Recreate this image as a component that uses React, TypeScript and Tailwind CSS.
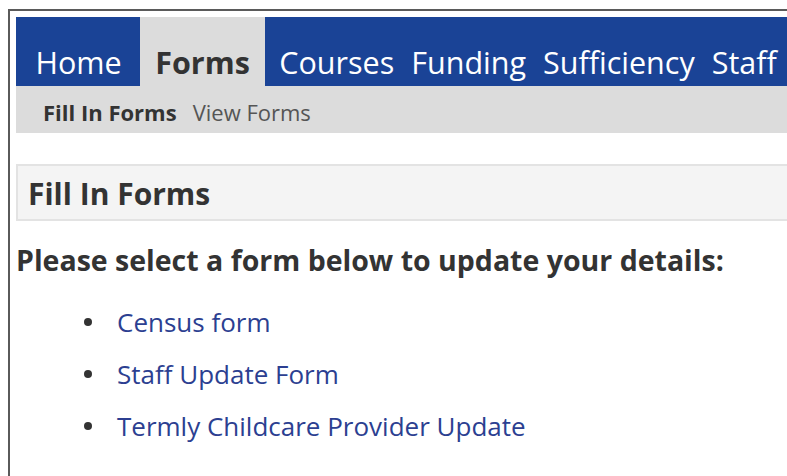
import React from 'react';

const navItems = ['Home', 'Forms', 'Courses', 'Funding', 'Sufficiency', 'Staff'];
const forms = ['Census form', 'Staff Update Form', 'Termly Childcare Provider Update'];

const font = { fontFamily: '"Open Sans", "Noto Sans", Arial, sans-serif' };

export default function App() {
  const active = 'Forms';

  return (
    <div className="w-[787px] h-[476px] bg-white overflow-hidden pt-[9px] pl-[8px]" style={font}>
      <div className="h-full border-l-2 border-t-2 border-[#5a5a5a] pl-[6px] pt-[6px] text-[#333]">
        {/* top level menu */}
        <ul className="flex items-end h-[69px] bg-[#1a4396] pl-[11px] whitespace-nowrap">
          {navItems.map((item) =>
            item === active ? (
              <li key={item} className="h-full flex items-end pb-[9px] px-[15px] ml-[10px] mr-[6px] bg-[#dcdcdc] text-[#333] font-bold text-[30.5px] leading-none">
                {item}
              </li>
            ) : (
              <li key={item} className="h-full flex items-end pb-[9px] px-[8.5px] text-white text-[30.5px] leading-none">
                {item}
              </li>
            )
          )}
        </ul>

        {/* sub menu */}
        <div className="h-[47px] bg-[#dcdcdc] flex items-center gap-[16px] pl-[27px] pt-[5px] text-[22px]">
          <span className="font-bold text-[#333]">Fill In Forms</span>
          <span className="text-[#555]">View Forms</span>
        </div>

        <div className="mt-[31px] h-[57px] bg-[#f4f4f4] border-2 border-[#e3e3e3] border-r-0 flex items-center pl-[10px] pt-[2px]">
          <h2 className="text-[30px] font-bold text-[#333] leading-none">Fill In Forms</h2>
        </div>

        <p className="mt-[22px] text-[28.5px] font-bold text-[#333] leading-tight">
          Please select a form below to update your details:
        </p>

        <ul className="mt-[26px] pl-[68px] space-y-[17px]">
          {forms.map((f) => (
            <li key={f} className="flex items-center gap-[25px] text-[26px] leading-[35px]">
              <span className="w-[8px] h-[8px] rounded-full bg-[#333] shrink-0" />
              <a className="text-[#2c3f91]">{f}</a>
            </li>
          ))}
        </ul>
      </div>
    </div>
  );
}
